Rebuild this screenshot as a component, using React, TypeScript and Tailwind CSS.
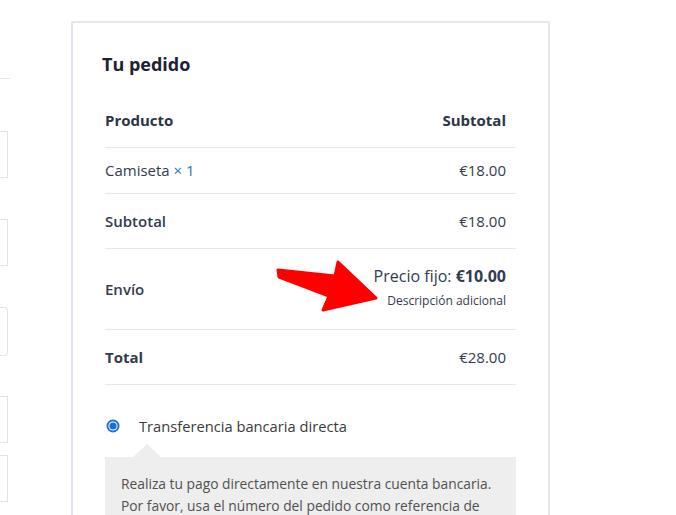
import React from 'react'

const font = { fontFamily: '"Open Sans", "Noto Sans", sans-serif' }

function LeftFields() {
  // bits of the billing form that are cut off at the left edge
  return (
    <div className="w-[10px] shrink-0 flex flex-col">
      <div className="mt-[78px] h-px w-[10px] bg-[#e4e9f0]" />
      <div className="mt-[52px] h-[47px] w-[8px] border border-l-0 border-[#e2e2ea]" />
      <div className="mt-[41px] h-[47px] w-[8px] border border-l-0 border-[#e2e2ea]" />
      <div className="mt-[41px] h-[49px] w-[8px] border border-l-0 border-[#e2e2ea] rounded-r" />
      <div className="mt-[40px] h-[47px] w-[8px] border border-l-0 border-[#e2e2ea]" />
      <div className="mt-[12px] h-[47px] w-[8px] border border-l-0 border-[#e2e2ea]" />
    </div>
  )
}

function Arrow() {
  return (
    <svg className="absolute left-0 top-0" width="676" height="515" viewBox="0 0 676 515">
      <polygon
        points="278,270 335,276 338,262 376,298 323,310 329,296 279,277"
        fill="#ff0000"
        stroke="#ff0000"
        strokeWidth="3"
        strokeLinejoin="round"
      />
    </svg>
  )
}

export default function App() {
  return (
    <div className="relative w-[676px] h-[515px] overflow-hidden bg-white flex text-[#333b4f]" style={font}>
      <LeftFields />

      <div className="ml-[61px] mt-[21px] w-[479px] h-[600px] shrink-0 border-2 border-[#e2e7f0] px-[32px] pt-[28px]">
        <h3 className="-ml-[3px] text-[18px] leading-[27px] font-bold text-[#1d2233]">Tu pedido</h3>

        <div className="mt-[16px] text-[15px]">
          <div className="h-[54px] flex items-center justify-between pr-[10px] border-b border-[#e2e7f0] font-bold text-[#2c3447]">
            <span>Producto</span>
            <span>Subtotal</span>
          </div>
          <div className="h-[46px] flex items-center justify-between pr-[10px] border-b border-[#e2e7f0]">
            <span>
              Camiseta <span className="text-[#2776b8]">× 1</span>
            </span>
            <span>€18.00</span>
          </div>
          <div className="h-[55px] flex items-center justify-between pr-[10px] border-b border-[#e2e7f0]">
            <span className="font-semibold">Subtotal</span>
            <span>€18.00</span>
          </div>
          <div className="h-[81px] flex items-center justify-between pr-[10px] border-b border-[#e2e7f0]">
            <span className="font-semibold">Envío</span>
            <div className="flex flex-col items-end">
              <span className="text-[16px] leading-[24px]">
                Precio fijo: <b>€10.00</b>
              </span>
              <span className="text-[12px] leading-[26px]">Descripción adicional</span>
            </div>
          </div>
          <div className="h-[55px] flex items-center justify-between pr-[10px] border-b border-[#e2e7f0]">
            <span className="font-bold">Total</span>
            <span>€28.00</span>
          </div>
        </div>

        <div className="mt-[30px] flex items-center">
          <svg className="ml-[1px]" width="14" height="14" viewBox="0 0 14 14">
            <circle cx="7" cy="7" r="6.5" fill="#1a6fe0" />
            <circle cx="7" cy="7" r="4.6" fill="#ffffff" />
            <circle cx="7" cy="7" r="3.6" fill="#1a6fe0" />
          </svg>
          <label className="ml-[19px] text-[14.7px] text-[#3b3b3b]">Transferencia bancaria directa</label>
        </div>

        <div className="relative mt-[20px] bg-[#eeeeee] px-[16px] pt-[16px] pb-4 text-[13.8px] leading-[22px] text-[#515151]">
          <span className="absolute -top-[13px] left-[28px] w-0 h-0 border-l-[14px] border-r-[14px] border-b-[13px] border-l-transparent border-r-transparent border-b-[#eeeeee]" />
          Realiza tu pago directamente en nuestra cuenta bancaria. Por favor, usa el número del pedido como referencia de pago. Tu pedido no se procesará hasta que se haya recibido el importe en nuestra cuenta.
        </div>
      </div>

      <Arrow />
    </div>
  )
}
